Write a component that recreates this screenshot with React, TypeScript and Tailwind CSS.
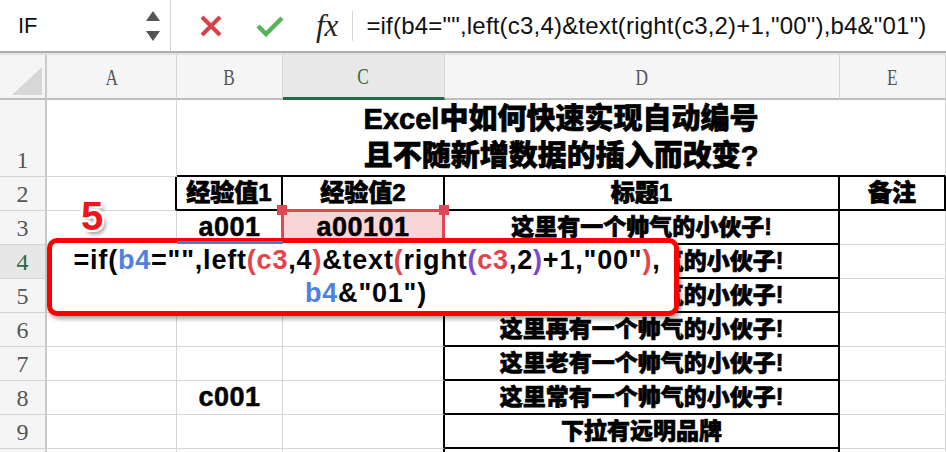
const sans = "font-['Liberation_Sans','Noto_Sans_CJK_SC',sans-serif]";
const serif = "font-['Liberation_Serif',serif]";
const cols = "grid grid-cols-[47px_130px_106px_162px_395px_106px]";

const gray = "border-r border-b border-r-[#d6d6d6] border-b-[#d6d6d6]";
const leftOfBlack = "border-r-2 border-b border-r-black border-b-[#d6d6d6]";
const boxed = "border-r-2 border-b-2 border-r-black border-b-black";
const cellText = `flex items-center justify-center ${sans} font-black text-black`;
const heavy = "[-webkit-text-stroke:0.7px_black]";
const code = "text-[27px] tracking-[0.5px] [-webkit-text-stroke:0.5px_black]";

function ColHead({ label, active }: { label: string; active?: boolean }) {
  return (
    <div
      className={
        active
          ? "flex items-center justify-center border-r border-r-[#d6d6d6] border-b-[3px] border-b-[#1e6c41] bg-[#e8e8e8]"
          : "flex items-center justify-center border-r border-r-[#d6d6d6] border-b-2 border-b-[#bdbdbd]"
      }
    >
      <span
        className={`inline-block scale-x-[0.72] ${serif} text-[24px] leading-none ${
          active ? "text-[#2c6b45]" : "text-[#555]"
        }`}
      >
        {label}
      </span>
    </div>
  );
}

function RowNum({ n, active }: { n?: number; active?: boolean }) {
  return (
    <div
      className={`flex items-end justify-center border-r-2 border-b border-r-[#c8c8c8] border-b-[#d4d4d4] pb-[3px] ${serif} text-[24px] leading-[26px] ${
        active ? "bg-[#e7e7e7] text-[#2c6b45]" : "bg-[#f5f5f5] text-[#555]"
      }`}
    >
      {n}
    </div>
  );
}

const rows: { n: number; b?: string; d: string }[] = [
  { n: 4, d: "这里还有一个帅气的小伙子!" },
  { n: 5, d: "这里又有一个帅气的小伙子!" },
  { n: 6, d: "这里再有一个帅气的小伙子!" },
  { n: 7, d: "这里老有一个帅气的小伙子!" },
  { n: 8, b: "c001", d: "这里常有一个帅气的小伙子!" },
  { n: 9, d: "下拉有远明品牌" },
  { n: 10, d: "" },
];

export default function App() {
  const blue = "text-[#4f7fe3]";
  const red = "text-[#e2444e]";
  const purple = "text-[#7b4cc8]";

  return (
    <div className="relative h-[452px] w-[946px] overflow-hidden bg-white">
      {/* formula bar */}
      <div className="flex h-[53px] items-center border-b-2 border-[#aeaeae]">
        <div className="flex h-full w-[171px] items-center justify-between border-r border-[#d0d0d0] pl-[18px] pr-[10px]">
          <span className={`${sans} text-[22px] text-[#111]`}>IF</span>
          <div className="flex flex-col gap-[10px]">
            <svg width="14" height="10" viewBox="0 0 14 10">
              <polygon points="7,0 14,10 0,10" fill="#555" />
            </svg>
            <svg width="14" height="10" viewBox="0 0 14 10">
              <polygon points="0,0 14,0 7,10" fill="#555" />
            </svg>
          </div>
        </div>
        <svg className="ml-[29px]" width="22" height="22" viewBox="0 0 22 22">
          <path d="M2 2 L20 20 M20 2 L2 20" stroke="#d8414a" strokeWidth="4" />
        </svg>
        <svg className="ml-[34px]" width="28" height="22" viewBox="0 0 28 22">
          <path d="M2 11 L10 19 L26 3" stroke="#58b15c" strokeWidth="4.5" fill="none" />
        </svg>
        <span className={`ml-[32px] ${serif} text-[31px] italic leading-none text-[#222]`}>fx</span>
        <div className="ml-[14px] h-[30px] w-px bg-[#d8d8d8]" />
        <span className={`ml-[13px] ${sans} text-[24px] tracking-[0.2px] text-[#111]`}>
          =if(b4="",left(c3,4)&amp;text(right(c3,2)+1,"00"),b4&amp;"01")
        </span>
      </div>
      <div className="h-[2px] bg-[#e2e2e2]" />

      {/* column headers */}
      <div className={`${cols} h-[45px] bg-[#f5f5f5]`}>
        <div className="relative border-r-2 border-b-2 border-r-[#cacaca] border-b-[#bdbdbd]">
          <svg className="absolute left-[12px] top-[12px]" width="30" height="28" viewBox="0 0 30 28">
            <polygon points="0,28 30,0 30,28" fill="#d7d7d7" />
          </svg>
        </div>
        <ColHead label="A" />
        <ColHead label="B" />
        <ColHead label="C" active />
        <ColHead label="D" />
        <ColHead label="E" />
      </div>

      {/* sheet */}
      <div className={`${cols} grid-rows-[77px_repeat(9,34px)]`}>
        {/* row 1 */}
        <RowNum n={1} />
        <div className={gray} />
        <div
          className={`col-span-4 flex flex-col items-center border-r border-b-2 border-r-[#d6d6d6] border-b-black pt-[1px] ${sans} ${heavy} text-[29px] font-black leading-[37px]`}
        >
          <span>Excel中如何快速实现自动编号</span>
          <span>且不随新增数据的插入而改变?</span>
        </div>

        {/* row 2 */}
        <RowNum n={2} />
        <div className={leftOfBlack} />
        <div className={`${boxed} ${cellText} ${heavy} text-[24px]`}>经验值1</div>
        <div className={`${boxed} ${cellText} ${heavy} text-[24px]`}>经验值2</div>
        <div className={`${boxed} ${cellText} ${heavy} text-[24px]`}>标题1</div>
        <div className={`${boxed} ${cellText} ${heavy} text-[24px]`}>备注</div>

        {/* row 3 */}
        <RowNum n={3} />
        <div className={gray} />
        <div className={`${gray} ${cellText} ${code}`}>a001</div>
        <div className={`relative ${leftOfBlack} ${cellText} ${code} bg-[#fad5d5]`}>
          a00101
          <div className="absolute -left-[2px] -right-[2px] -top-[2px] bottom-0 border-[3px] border-[#de4a54]" />
          <div className="absolute -left-[6px] -top-[6px] h-[10px] w-[10px] bg-[#de4a54]" />
          <div className="absolute -right-[6px] -top-[6px] h-[10px] w-[10px] bg-[#de4a54]" />
        </div>
        <div className={`${boxed} ${cellText} ${heavy} text-[23px]`}>这里有一个帅气的小伙子!</div>
        <div className={gray} />

        {rows.map((r) => (
          <div key={r.n} className="contents">
            <RowNum n={r.n < 10 ? r.n : undefined} active={r.n === 4} />
            <div className={gray} />
            <div className={`${gray} ${cellText} ${code}`}>{r.b ?? ""}</div>
            <div className={leftOfBlack} />
            <div className={`${boxed} ${cellText} ${heavy} text-[23px]`}>{r.d}</div>
            <div className={gray} />
          </div>
        ))}
      </div>

      {/* step badge */}
      <div
        className={`absolute left-[81px] top-[186px] ${sans} text-[40px] font-bold text-[#f0151d] [text-shadow:2px_0_0_#fff,-2px_0_0_#fff,0_2px_0_#fff,0_-2px_0_#fff,2px_2px_0_#fff,-2px_-2px_0_#fff,2px_-2px_0_#fff,-2px_2px_0_#fff,3px_4px_4px_rgba(0,0,0,0.45)]`}
      >
        5
      </div>

      {/* formula callout */}
      <div
        className={`absolute left-[47px] top-[238px] flex h-[78px] w-[632px] flex-col items-center justify-center rounded-[10px] border-[5px] border-[#ff0000] bg-white shadow-[2px_3px_4px_rgba(0,0,0,0.35)] ${sans} text-[27px] font-bold leading-[33px] tracking-[0.8px] text-black`}
      >
        <div className="pl-[8px]">
          =if(<span className={blue}>b4</span>="",left<span className={red}>(c3</span>,4
          <span className={red}>)</span>&amp;text<span className={red}>(</span>right
          <span className={purple}>(</span>
          <span className={red}>c3</span>,2<span className={purple}>)</span>+1,"00"
          <span className={red}>)</span>,
        </div>
        <div className="pl-[6px]">
          <span className={blue}>b4</span>&amp;"01")
        </div>
      </div>
      <div className="absolute left-[177px] top-[241px] h-[3px] w-[106px] bg-[#4a78d8]" />
    </div>
  );
}
